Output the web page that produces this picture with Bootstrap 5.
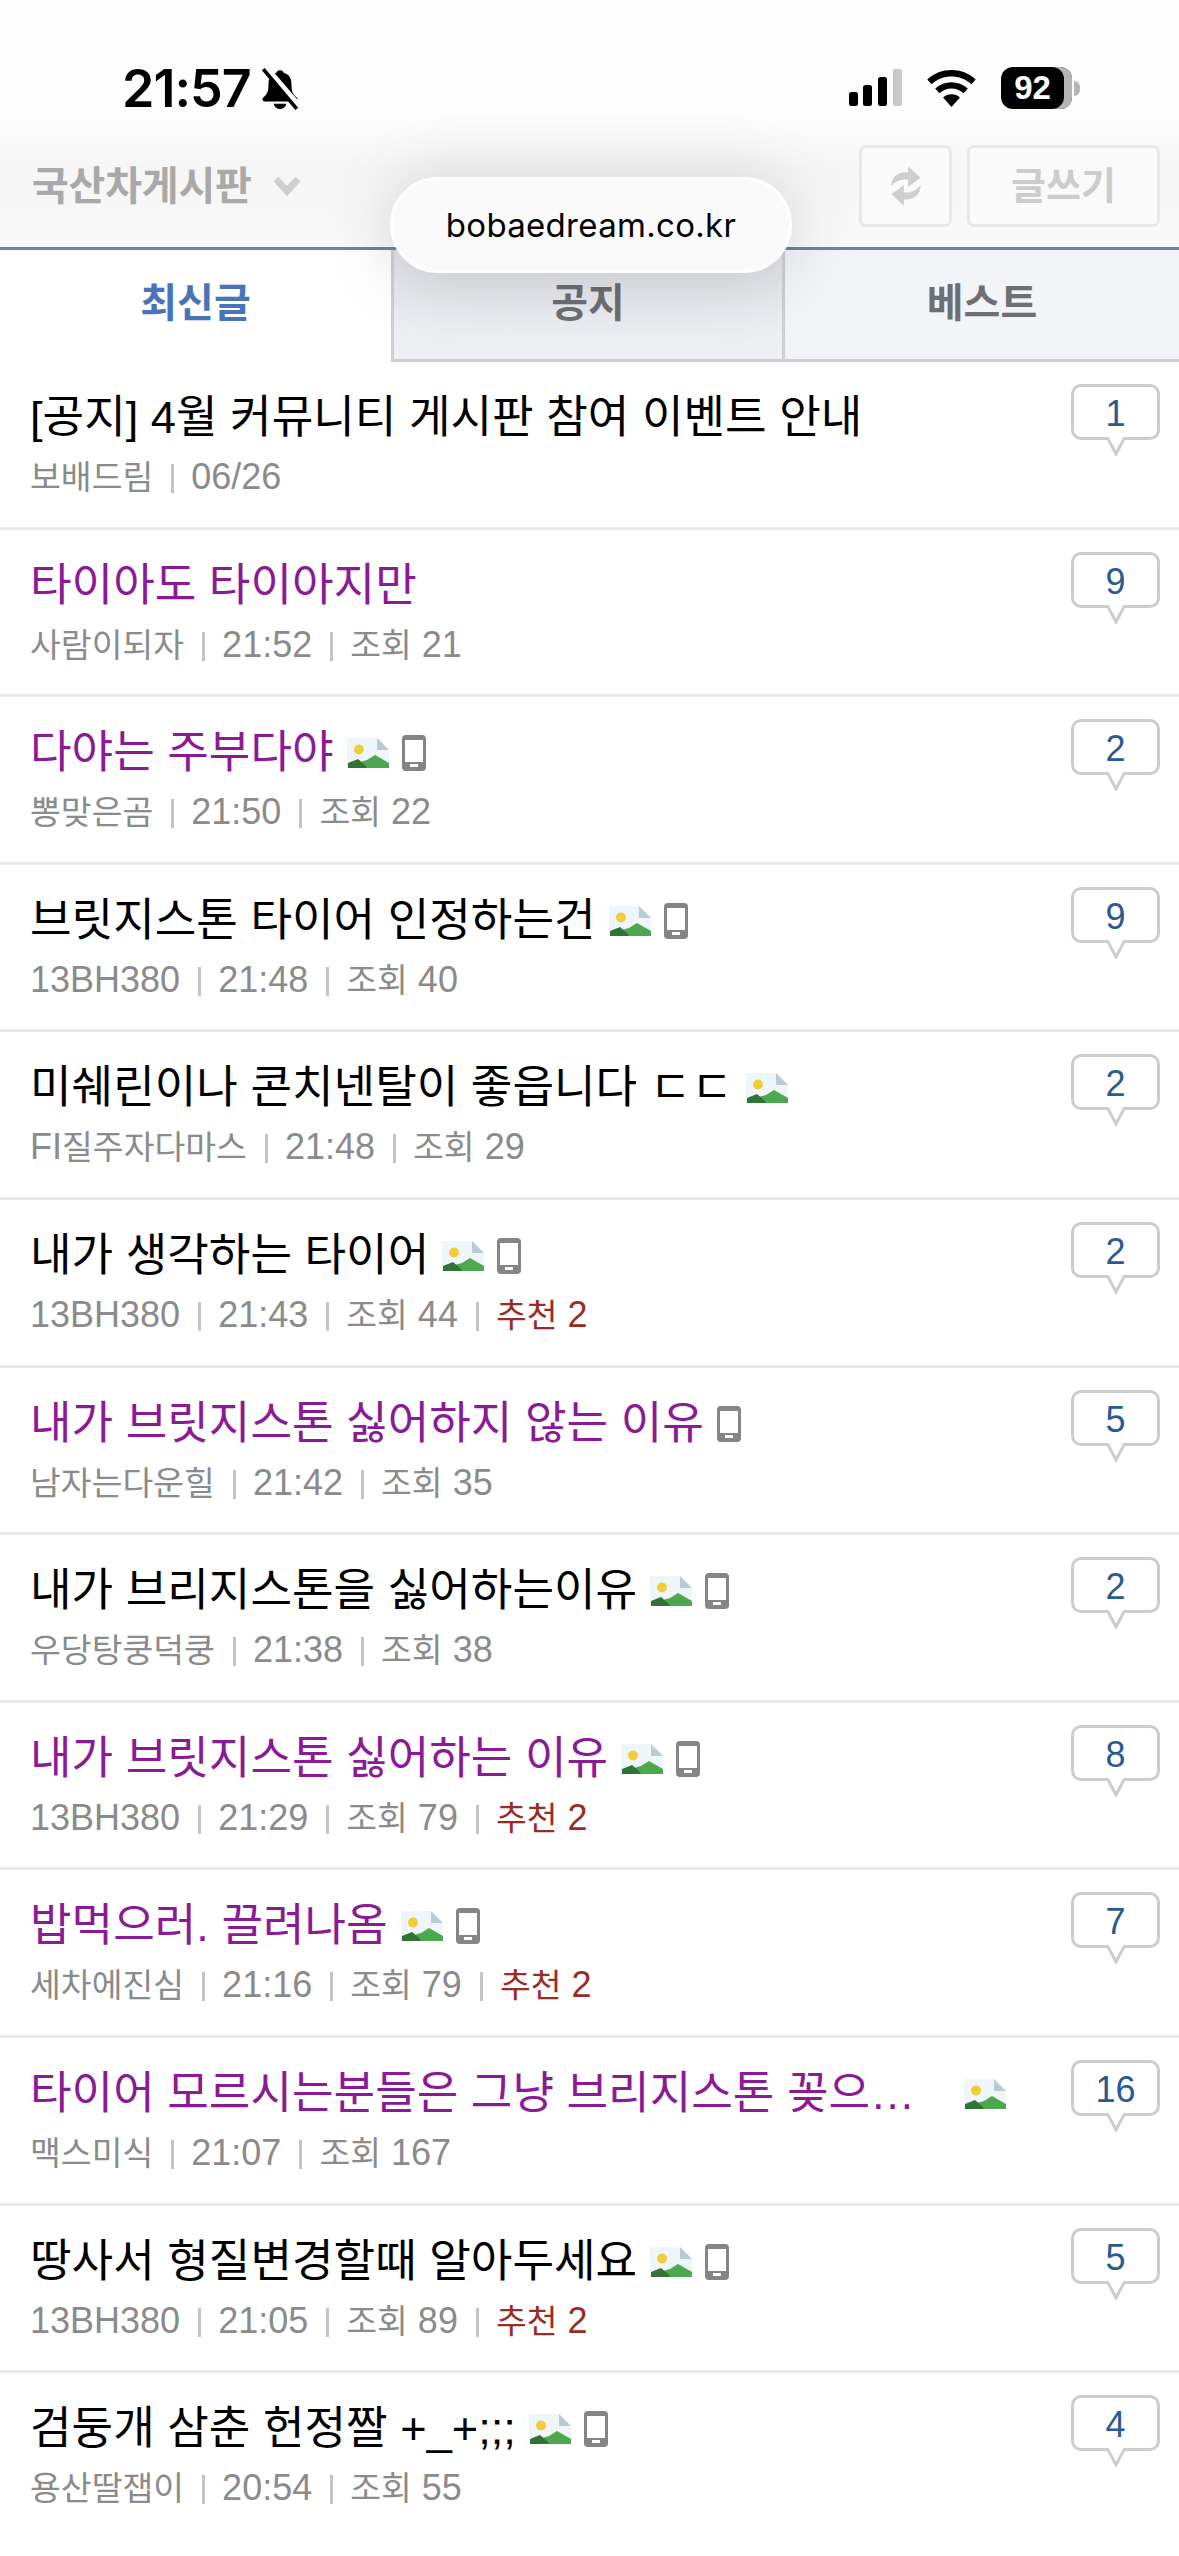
<!DOCTYPE html>
<html lang="ko"><head><meta charset="utf-8">
<link href="https://cdn.jsdelivr.net/npm/bootstrap@5.3.0/dist/css/bootstrap.min.css" rel="stylesheet">
<style>
html,body{margin:0;background:#fff;}
body{width:1179px;height:2556px;overflow:hidden;position:relative;font-family:"Liberation Sans","Noto Sans CJK KR",sans-serif;}
.topzone{height:247px;background:linear-gradient(#fefefe 0,#fdfdfd 110px,#f6f6f7 170px,#f9f9f9 247px);}
.sbar{height:145px;padding:0 99px 0 122px;}
.clock{font-family:Inter,"Liberation Sans",sans-serif;font-weight:600;font-size:52px;letter-spacing:-1px;line-height:1;color:#000;margin-top:63px;}
.bell{margin-top:67px;margin-left:8px;}
.sright{margin-top:67px;}
.wifi{margin:0 24px 0 22px;}
.batt{width:71px;height:42px;border-radius:12px;background:#000;color:#fff;font:700 33px/42px "Liberation Sans",sans-serif;text-align:center;padding-right:8px;box-shadow:inset -8px 0 0 #b5b5b5;}
.batt-nub{width:6px;height:15px;border-radius:0 8px 8px 0;background:#b5b5b5;margin-left:2px;}
.hrow{height:82px;padding:0 19px 0 32px;}
.bname{font-size:40px;font-weight:700;color:#a9a9a9;letter-spacing:-.2px;line-height:1;}
.chev{margin-left:20px;}
.hbtn{height:82px;border:3px solid #e8e8e8;border-radius:7px;background:#fafafa;color:#ccc;font-size:38px;font-weight:700;padding:0;display:flex;align-items:center;justify-content:center;}
.hbtn-r{width:93px;}
.hbtn-w{width:193px;}
.tabline{height:3px;background:#6f83a0;}
.tabs{height:112px;}
.tabi{font-size:40px;font-weight:700;color:#6e6f74;line-height:106px;text-align:center;border-bottom:3px solid #cfcfcf;}
.tab-a{width:391px;background:#fff;color:#4a73b8;border-bottom:0;}
.tab-b{width:394px;background:linear-gradient(#e2e4e9,#eff1f5);border-left:3px solid #cfcfcf;border-right:3px solid #cfcfcf;}
.tab-c{flex:1;background:#f2f4f8;}
.list-group-flush>.postrow{height:167.6px;padding:22px 19px 0 30px;border-width:0 0 3px;border-style:solid;border-color:#e8e8ed;border-radius:0;background:transparent;}
.ptitle-wrap{height:60px;margin-top:4px;}
.ptitle{font-size:45.2px;line-height:60px;color:#000;white-space:nowrap;}
.visited{color:#8b1a96;}
.pmeta{font-size:36px;line-height:44px;margin-top:7px;color:#8b8b8b;white-space:nowrap;}
.hg{font-size:33.5px;}
.sep{display:inline-block;width:3px;height:29px;background:#c4c4c4;margin:0 17px 0 18px;vertical-align:-4px;}
.rec{color:#9a2b25;}
.picon{width:42px;height:30px;margin-left:13px;flex:none;}
.picon-far{margin-left:49px;}
.phone{width:24px;height:36px;margin-left:13px;flex:none;}
.bubble{position:relative;width:89px;height:56px;border:3px solid #cdcdcd;border-radius:10px;background:#fff;color:#2a5a90;font-size:36px;line-height:54px;text-align:center;}
.btail{position:absolute;left:32px;top:50px;width:20px;height:19px;}
.pill{position:absolute;left:390px;top:177px;width:402px;height:96px;border-radius:48px;background:#fafafa;border:3px solid #fff;box-shadow:0 4px 70px rgba(0,0,0,.16);font:400 33px/90px Inter,"Liberation Sans",sans-serif;letter-spacing:.3px;color:#000;text-align:center;}
</style></head>
<body>
<div class="topzone">
  <div class="sbar d-flex justify-content-between align-items-start">
    <div class="d-flex align-items-start">
      <div class="clock">21:57</div>
      <svg class="bell" width="42" height="44" viewBox="0 0 36 42"><path d="M18 3c2 0 3 1 3.500 2.500C27 7 29 11 29 17c0 6 1 9 5 12 1.500 1.500 .5 4-2 4H4c-2.500 0-3.500-2.500-2-4 4-3 5-6 5-12 0-6 2-10 7.500-11.500C15 4 16 3 18 3zM12 35h12c-.5 3-3 5-6 5s-5.500-2-6-5z" fill="#000"/><path d="M4 1 L36 38" stroke="#fdfdfd" stroke-width="7"/><path d="M2 2 L34 40" stroke="#000" stroke-width="3.500"/></svg>
    </div>
    <div class="sright d-flex align-items-center">
      <svg width="57" height="38" viewBox="0 0 53 38"><rect x="0" y="23" width="9" height="14" rx="2.500" fill="#000"/><rect x="14" y="16" width="9" height="21" rx="2.500" fill="#000"/><rect x="29" y="8" width="9" height="29" rx="2.500" fill="#000"/><rect x="44" y="0" width="9" height="37" rx="2.500" fill="#c8c8c8"/></svg>
      <svg class="wifi" width="51" height="40" viewBox="0 0 46 38"><path d="M23 37 15 28c4.500-4 11.500-4 16 0zM11.500 24 7.500 19.500c9-8 22-8 31 0L34.500 24c-6.500-6-16.500-6-23 0zM4 15.500 0 11C13-1 33-1 46 11l-4 4.500C31.500 5.500 14.500 5.500 4 15.500z" fill="#000"/></svg>
      <div class="batt">92</div><div class="batt-nub"></div>
    </div>
  </div>
  <div class="hrow d-flex justify-content-between align-items-center">
    <div class="d-flex align-items-center">
      <span class="bname">국산차게시판</span>
      <svg class="chev" width="30" height="24" viewBox="0 0 28 24"><path d="M3 5l11 12L25 5" fill="none" stroke="#cfcfcf" stroke-width="7"/></svg>
    </div>
    <div class="d-flex" style="gap:15px">
      <button type="button" class="btn hbtn hbtn-r"><svg width="32" height="46" viewBox="0 0 30 44"><path d="M1 22C1 13 7 8 17 9V3l12 11-12 9v-7C10 15 5 17 1 22z" fill="#cfcfcf"/><path d="M29 21c0 9-6 14-16 14v6L1 30l12-9v7c7 1 12-2 16-7z" fill="#cfcfcf"/></svg></button>
      <button type="button" class="btn hbtn hbtn-w">글쓰기</button>
    </div>
  </div>
  <div style="height:20px"></div>
</div>
<div class="tabline"></div>
<div class="tabs d-flex">
  <div class="tabi tab-a">최신글</div>
  <div class="tabi tab-b">공지</div>
  <div class="tabi tab-c">베스트</div>
</div>
<svg width="0" height="0" class="d-block" style="height:0">
  <defs>
    <symbol id="pic" viewBox="0 0 42 30"><path d="M0 0H30L42 12V30H0z" fill="#eff6f9"/><path d="M30 0 42 12H30z" fill="#b9ccd6"/><circle cx="12" cy="11.500" r="5" fill="#f2cd3b"/><path d="M12 30 13 24 20 22 28 17 42 25V30z" fill="#4da74e"/><path d="M1 30V25L11 21 18 27 20 30z" fill="#2f7434"/></symbol>
    <symbol id="tel" viewBox="0 0 24 36"><rect width="24" height="36" rx="4" fill="#858585"/><rect x="3" y="5" width="18" height="22" fill="#fff"/><rect x="8" y="29" width="8" height="3" fill="#fff"/></symbol>
    <symbol id="tl" viewBox="0 0 20 19"><path d="M1 0 10 17 19 0" fill="#fff" stroke="#cdcdcd" stroke-width="3"/></symbol>
  </defs>
</svg>
<div class="list-group list-group-flush">
<div class="list-group-item postrow d-flex justify-content-between">
  <div class="flex-grow-1" style="min-width:0"><div class="ptitle-wrap d-flex align-items-center"><div class="ptitle">[공지] 4월 커뮤니티 게시판 참여 이벤트 안내</div></div>
  <div class="pmeta"><span class="hg">보배드림</span><i class="sep"></i>06/26</div></div>
  <div class="bubble">1<svg class="btail"><use href="#tl"/></svg></div>
</div>
<div class="list-group-item postrow d-flex justify-content-between">
  <div class="flex-grow-1" style="min-width:0"><div class="ptitle-wrap d-flex align-items-center"><div class="ptitle visited">타이아도 타이아지만</div></div>
  <div class="pmeta"><span class="hg">사람이되자</span><i class="sep"></i>21:52<i class="sep"></i><span class="hg">조회</span> 21</div></div>
  <div class="bubble">9<svg class="btail"><use href="#tl"/></svg></div>
</div>
<div class="list-group-item postrow d-flex justify-content-between">
  <div class="flex-grow-1" style="min-width:0"><div class="ptitle-wrap d-flex align-items-center"><div class="ptitle visited">다야는 주부다야</div><svg class="picon"><use href="#pic"/></svg><svg class="phone"><use href="#tel"/></svg></div>
  <div class="pmeta"><span class="hg">뽕맞은곰</span><i class="sep"></i>21:50<i class="sep"></i><span class="hg">조회</span> 22</div></div>
  <div class="bubble">2<svg class="btail"><use href="#tl"/></svg></div>
</div>
<div class="list-group-item postrow d-flex justify-content-between">
  <div class="flex-grow-1" style="min-width:0"><div class="ptitle-wrap d-flex align-items-center"><div class="ptitle">브릿지스톤 타이어 인정하는건</div><svg class="picon"><use href="#pic"/></svg><svg class="phone"><use href="#tel"/></svg></div>
  <div class="pmeta">13BH380<i class="sep"></i>21:48<i class="sep"></i><span class="hg">조회</span> 40</div></div>
  <div class="bubble">9<svg class="btail"><use href="#tl"/></svg></div>
</div>
<div class="list-group-item postrow d-flex justify-content-between">
  <div class="flex-grow-1" style="min-width:0"><div class="ptitle-wrap d-flex align-items-center"><div class="ptitle">미쉐린이나 콘치넨탈이 좋읍니다 ㄷㄷ</div><svg class="picon"><use href="#pic"/></svg></div>
  <div class="pmeta">FI<span class="hg">질주자다마스</span><i class="sep"></i>21:48<i class="sep"></i><span class="hg">조회</span> 29</div></div>
  <div class="bubble">2<svg class="btail"><use href="#tl"/></svg></div>
</div>
<div class="list-group-item postrow d-flex justify-content-between">
  <div class="flex-grow-1" style="min-width:0"><div class="ptitle-wrap d-flex align-items-center"><div class="ptitle">내가 생각하는 타이어</div><svg class="picon"><use href="#pic"/></svg><svg class="phone"><use href="#tel"/></svg></div>
  <div class="pmeta">13BH380<i class="sep"></i>21:43<i class="sep"></i><span class="hg">조회</span> 44<i class="sep"></i><span class="rec"><span class="hg">추천</span> 2</span></div></div>
  <div class="bubble">2<svg class="btail"><use href="#tl"/></svg></div>
</div>
<div class="list-group-item postrow d-flex justify-content-between">
  <div class="flex-grow-1" style="min-width:0"><div class="ptitle-wrap d-flex align-items-center"><div class="ptitle visited">내가 브릿지스톤 싫어하지 않는 이유</div><svg class="phone"><use href="#tel"/></svg></div>
  <div class="pmeta"><span class="hg">남자는다운힐</span><i class="sep"></i>21:42<i class="sep"></i><span class="hg">조회</span> 35</div></div>
  <div class="bubble">5<svg class="btail"><use href="#tl"/></svg></div>
</div>
<div class="list-group-item postrow d-flex justify-content-between">
  <div class="flex-grow-1" style="min-width:0"><div class="ptitle-wrap d-flex align-items-center"><div class="ptitle">내가 브리지스톤을 싫어하는이유</div><svg class="picon"><use href="#pic"/></svg><svg class="phone"><use href="#tel"/></svg></div>
  <div class="pmeta"><span class="hg">우당탕쿵덕쿵</span><i class="sep"></i>21:38<i class="sep"></i><span class="hg">조회</span> 38</div></div>
  <div class="bubble">2<svg class="btail"><use href="#tl"/></svg></div>
</div>
<div class="list-group-item postrow d-flex justify-content-between">
  <div class="flex-grow-1" style="min-width:0"><div class="ptitle-wrap d-flex align-items-center"><div class="ptitle visited">내가 브릿지스톤 싫어하는 이유</div><svg class="picon"><use href="#pic"/></svg><svg class="phone"><use href="#tel"/></svg></div>
  <div class="pmeta">13BH380<i class="sep"></i>21:29<i class="sep"></i><span class="hg">조회</span> 79<i class="sep"></i><span class="rec"><span class="hg">추천</span> 2</span></div></div>
  <div class="bubble">8<svg class="btail"><use href="#tl"/></svg></div>
</div>
<div class="list-group-item postrow d-flex justify-content-between">
  <div class="flex-grow-1" style="min-width:0"><div class="ptitle-wrap d-flex align-items-center"><div class="ptitle visited">밥먹으러. 끌려나옴</div><svg class="picon"><use href="#pic"/></svg><svg class="phone"><use href="#tel"/></svg></div>
  <div class="pmeta"><span class="hg">세차에진심</span><i class="sep"></i>21:16<i class="sep"></i><span class="hg">조회</span> 79<i class="sep"></i><span class="rec"><span class="hg">추천</span> 2</span></div></div>
  <div class="bubble">7<svg class="btail"><use href="#tl"/></svg></div>
</div>
<div class="list-group-item postrow d-flex justify-content-between">
  <div class="flex-grow-1" style="min-width:0"><div class="ptitle-wrap d-flex align-items-center"><div class="ptitle visited">타이어 모르시는분들은 그냥 브리지스톤 꽂으…</div><svg class="picon picon-far"><use href="#pic"/></svg></div>
  <div class="pmeta"><span class="hg">맥스미식</span><i class="sep"></i>21:07<i class="sep"></i><span class="hg">조회</span> 167</div></div>
  <div class="bubble">16<svg class="btail"><use href="#tl"/></svg></div>
</div>
<div class="list-group-item postrow d-flex justify-content-between">
  <div class="flex-grow-1" style="min-width:0"><div class="ptitle-wrap d-flex align-items-center"><div class="ptitle">땅사서 형질변경할때 알아두세요</div><svg class="picon"><use href="#pic"/></svg><svg class="phone"><use href="#tel"/></svg></div>
  <div class="pmeta">13BH380<i class="sep"></i>21:05<i class="sep"></i><span class="hg">조회</span> 89<i class="sep"></i><span class="rec"><span class="hg">추천</span> 2</span></div></div>
  <div class="bubble">5<svg class="btail"><use href="#tl"/></svg></div>
</div>
<div class="list-group-item postrow d-flex justify-content-between">
  <div class="flex-grow-1" style="min-width:0"><div class="ptitle-wrap d-flex align-items-center"><div class="ptitle">검둥개 삼춘 헌정짤 +_+;;;</div><svg class="picon"><use href="#pic"/></svg><svg class="phone"><use href="#tel"/></svg></div>
  <div class="pmeta"><span class="hg">용산딸잽이</span><i class="sep"></i>20:54<i class="sep"></i><span class="hg">조회</span> 55</div></div>
  <div class="bubble">4<svg class="btail"><use href="#tl"/></svg></div>
</div>
</div>
<div class="pill">bobaedream.co.kr</div>
<script src="https://cdn.jsdelivr.net/npm/bootstrap@5.3.0/dist/js/bootstrap.bundle.min.js"></script>
</body></html>
